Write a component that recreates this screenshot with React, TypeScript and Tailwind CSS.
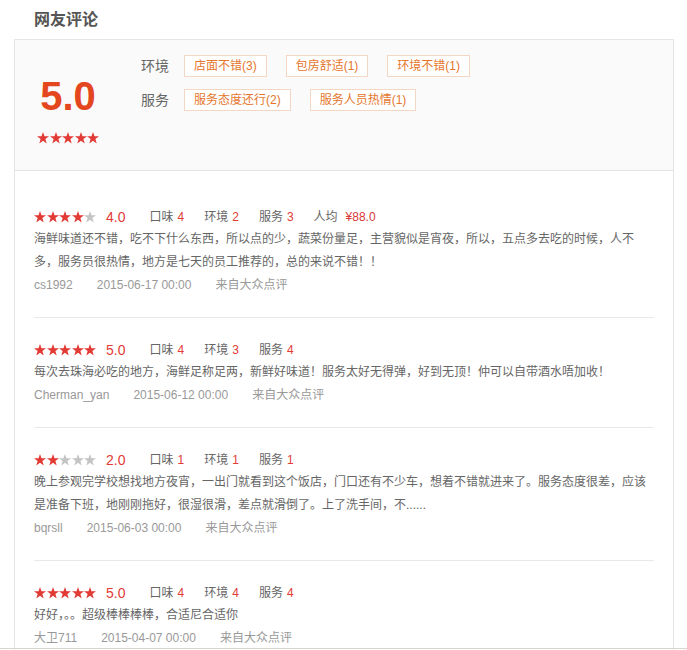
const summary = {
  score: '5.0',
  groups: [
    { label: '环境', tags: ['店面不错(3)', '包房舒适(1)', '环境不错(1)'] },
    { label: '服务', tags: ['服务态度还行(2)', '服务人员热情(1)'] },
  ],
};

type Review = {
  stars: number;
  score: string;
  taste: number;
  env: number;
  service: number;
  price?: string;
  text: string;
  user: string;
  date: string;
};

const reviews: Review[] = [
  {
    stars: 4,
    score: '4.0',
    taste: 4,
    env: 2,
    service: 3,
    price: '¥88.0',
    text: '海鲜味道还不错，吃不下什么东西，所以点的少，蔬菜份量足，主营貌似是宵夜，所以，五点多去吃的时候，人不多，服务员很热情，地方是七天的员工推荐的，总的来说不错！！',
    user: 'cs1992',
    date: '2015-06-17 00:00',
  },
  {
    stars: 5,
    score: '5.0',
    taste: 4,
    env: 3,
    service: 4,
    text: '每次去珠海必吃的地方，海鲜足称足两，新鲜好味道！服务太好无得弹，好到无顶！仲可以自带酒水唔加收！',
    user: 'Cherman_yan',
    date: '2015-06-12 00:00',
  },
  {
    stars: 2,
    score: '2.0',
    taste: 1,
    env: 1,
    service: 1,
    text: '晚上参观完学校想找地方夜宵，一出门就看到这个饭店，门口还有不少车，想着不错就进来了。服务态度很差，应该是准备下班，地刚刚拖好，很湿很滑，差点就滑倒了。上了洗手间，不......',
    user: 'bqrsll',
    date: '2015-06-03 00:00',
  },
  {
    stars: 5,
    score: '5.0',
    taste: 4,
    env: 4,
    service: 4,
    text: '好好，。。超级棒棒棒棒，合适尼合适你',
    user: '大卫711',
    date: '2015-04-07 00:00',
  },
];

function Stars({ n, className = '' }: { n: number; className?: string }) {
  return (
    <div className={`flex gap-[0.5px] ${className}`}>
      {[0, 1, 2, 3, 4].map((i) => (
        <svg key={i} width="12" height="12" viewBox="2 2 20 20">
          <polygon
            points="12,2 14.47,9.1 21.99,9.26 15.99,13.8 18.17,20.99 12,16.7 5.83,20.99 8.01,13.8 2.01,9.26 9.53,9.1"
            fill={i < n ? '#e23a35' : '#c4c4c4'}
          />
        </svg>
      ))}
    </div>
  );
}

function Item({ label, value }: { label: string; value: string | number }) {
  return (
    <span className="flex items-center">
      <span className="text-[#666]">{label}</span>
      <span className="ml-[4px] text-[#e23a35]">{value}</span>
    </span>
  );
}

export default function App() {
  return (
    <div className="w-[687px] min-h-[650px] bg-white font-['Liberation_Sans','Noto_Sans_CJK_SC',sans-serif]">
      <div className="pl-[14px]">
        <h2 className="h-[39px] pl-[20px] flex items-center text-[16px] font-bold text-[#555]">
          网友评论
        </h2>

        <div className="w-[660px] border border-[#e5e5e5]">
          {/* summary */}
          <div className="h-[131px] bg-[#fafafa] border-b border-[#e5e5e5] flex">
            <div className="w-[106px] flex flex-col items-center pt-[36px]">
              <div className="text-[40px] leading-[40px] font-bold text-[#e4471e]">
                {summary.score}
              </div>
              <Stars n={5} className="mt-[16px]" />
            </div>
            <div className="ml-[20px] pt-[15px] flex flex-col gap-[12px]">
              {summary.groups.map((g) => (
                <div key={g.label} className="flex items-center h-[22px]">
                  <span className="w-[43px] text-[14px] text-[#666]">{g.label}</span>
                  <div className="flex gap-[19px]">
                    {g.tags.map((t) => (
                      <span
                        key={t}
                        className="h-[22px] px-[9px] flex items-center bg-white border border-[#f3d7c3] text-[12px] text-[#e5762c]"
                      >
                        {t}
                      </span>
                    ))}
                  </div>
                </div>
              ))}
            </div>
          </div>

          {/* reviews */}
          <div className="pt-[14px]">
            {reviews.map((r, i) => (
              <div key={i} className="mx-[19px] pt-[21px] pb-[21px] border-b border-[#e8e8e8]">
                <div className="h-[22px] flex items-center">
                  <Stars n={r.stars} />
                  <span className="ml-[10px] text-[14px] text-[#e23a35]">{r.score}</span>
                  <div className="ml-[24px] flex gap-[20px] text-[12px]">
                    <Item label="口味" value={r.taste} />
                    <Item label="环境" value={r.env} />
                    <Item label="服务" value={r.service} />
                    {r.price && (
                      <span className="flex items-center">
                        <span className="text-[#666]">人均</span>
                        <span className="ml-[8px] text-[#d8383a]">{r.price}</span>
                      </span>
                    )}
                  </div>
                </div>
                <p className="text-[12px] leading-[23px] text-[#666]">{r.text}</p>
                <div className="h-[22px] flex items-center gap-[24px] text-[12px] text-[#999]">
                  <span>{r.user}</span>
                  <span>{r.date}</span>
                  <span>来自大众点评</span>
                </div>
              </div>
            ))}
          </div>
        </div>
      </div>
      <div className="fixed left-0 bottom-[1px] w-full h-[1px] bg-[#d6d6ce]" />
    </div>
  );
}
